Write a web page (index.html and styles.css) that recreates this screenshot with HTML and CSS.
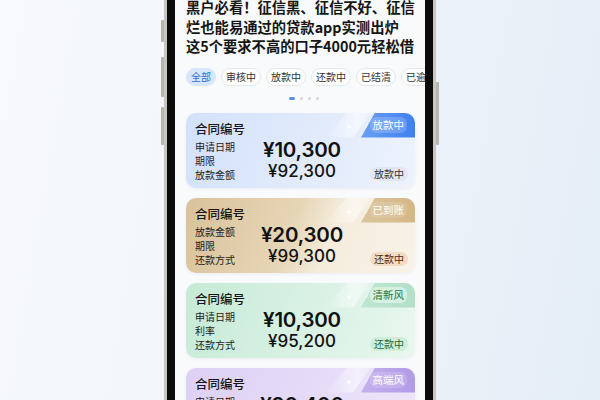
FILE: index.html
```html
<!DOCTYPE html>
<html lang="zh-CN">
<head>
<meta charset="utf-8">
<link rel="stylesheet" href="styles.css">
</head>
<body>
<div class="stage">
  <div class="phone">
    <span class="side-btn btn-l1"></span>
    <span class="side-btn btn-l2"></span>
    <span class="side-btn btn-l3"></span>
    <span class="side-btn btn-r1"></span>
    <div class="screen">
      <h1 class="title">黑户必看！征信黑、征信不好、征信<br>烂也能易通过的贷款app实测出炉<br>这5个要求不高的口子4000元轻松借</h1>
      <div class="tabs">
        <span class="tab tab-active">全部</span>
        <span class="tab">审核中</span>
        <span class="tab">放款中</span>
        <span class="tab">还款中</span>
        <span class="tab">已结清</span>
        <span class="tab">已逾期</span>
      </div>
      <div class="dots">
        <span class="dot dot-active"></span><span class="dot"></span><span class="dot"></span><span class="dot"></span>
      </div>
      <div class="cards">
        <div class="card card-blue">
          <div class="tag">
            <span class="shine"></span>
            <svg class="sparks" width="30" height="10" viewBox="0 0 30 10"><path d="M5 1.5L5.7 4.3L8.5 5L5.7 5.7L5 8.5L4.3 5.7L1.5 5L4.3 4.3Z M24 1.5L24.7 4.3L27.5 5L24.7 5.7L24 8.5L23.3 5.7L20.5 5L23.3 4.3Z" fill="#fff"/></svg>
            <span class="tag-body"><span class="tag-text">放款中</span></span>
          </div>
          <div class="card-left">
            <div class="card-title">合同编号</div>
            <div class="label">申请日期</div>
            <div class="label">期限</div>
            <div class="label">放款金额</div>
          </div>
          <div class="amounts">
            <div class="amt-big">¥10,300</div>
            <div class="amt-small">¥92,300</div>
          </div>
          <div class="card-right"><span class="chip">放款中</span></div>
        </div>

        <div class="card card-gold">
          <div class="tag">
            <span class="shine"></span>
            <svg class="sparks" width="30" height="10" viewBox="0 0 30 10"><path d="M5 1.5L5.7 4.3L8.5 5L5.7 5.7L5 8.5L4.3 5.7L1.5 5L4.3 4.3Z M24 1.5L24.7 4.3L27.5 5L24.7 5.7L24 8.5L23.3 5.7L20.5 5L23.3 4.3Z" fill="#fff"/></svg>
            <span class="tag-body"><span class="tag-text">已到账</span></span>
          </div>
          <div class="card-left">
            <div class="card-title">合同编号</div>
            <div class="label">放款金额</div>
            <div class="label">期限</div>
            <div class="label">还款方式</div>
          </div>
          <div class="amounts">
            <div class="amt-big">¥20,300</div>
            <div class="amt-small">¥99,300</div>
          </div>
          <div class="card-right"><span class="chip">还款中</span></div>
        </div>

        <div class="card card-green">
          <div class="tag">
            <span class="shine"></span>
            <svg class="sparks" width="30" height="10" viewBox="0 0 30 10"><path d="M5 1.5L5.7 4.3L8.5 5L5.7 5.7L5 8.5L4.3 5.7L1.5 5L4.3 4.3Z M24 1.5L24.7 4.3L27.5 5L24.7 5.7L24 8.5L23.3 5.7L20.5 5L23.3 4.3Z" fill="#fff"/></svg>
            <span class="tag-body"><span class="tag-text">清新风</span></span>
          </div>
          <div class="card-left">
            <div class="card-title">合同编号</div>
            <div class="label">申请日期</div>
            <div class="label">利率</div>
            <div class="label">还款方式</div>
          </div>
          <div class="amounts">
            <div class="amt-big">¥10,300</div>
            <div class="amt-small">¥95,200</div>
          </div>
          <div class="card-right"><span class="chip">还款中</span></div>
        </div>

        <div class="card card-purple">
          <div class="tag">
            <span class="shine"></span>
            <svg class="sparks" width="30" height="10" viewBox="0 0 30 10"><path d="M5 1.5L5.7 4.3L8.5 5L5.7 5.7L5 8.5L4.3 5.7L1.5 5L4.3 4.3Z M24 1.5L24.7 4.3L27.5 5L24.7 5.7L24 8.5L23.3 5.7L20.5 5L23.3 4.3Z" fill="#fff"/></svg>
            <span class="tag-body"><span class="tag-text">高端风</span></span>
          </div>
          <div class="card-left">
            <div class="card-title">合同编号</div>
            <div class="label">申请日期</div>
            <div class="label">期限</div>
            <div class="label">放款金额</div>
          </div>
          <div class="amounts">
            <div class="amt-big">¥90,400</div>
            <div class="amt-small">¥92,300</div>
          </div>
          <div class="card-right"><span class="chip">放款中</span></div>
        </div>
      </div>
    </div>
  </div>
</div>
</body>
</html>
```

FILE: styles.css
```css
* { box-sizing: border-box; }
html, body { margin: 0; padding: 0; }
body {
  width: 600px;
  height: 400px;
  overflow: hidden;
  font-family: "Noto Sans CJK SC", "Noto Sans", sans-serif;
  background: linear-gradient(100deg, #f7f9fc 0%, #f1f5fa 45%, #e5edf7 100%);
}
.stage {
  width: 600px;
  height: 400px;
  overflow: hidden;
  display: flex;
  justify-content: center;
}
.phone {
  position: relative;
  width: 272px;
  height: 560px;
  margin-top: -60px;
  border: 3px solid #c9c6bf;
  border-radius: 44px;
  background: #0b0b0b;
  padding: 8px;
  flex-shrink: 0;
}
.side-btn {
  position: absolute;
  width: 3px;
  background: #b9b6af;
  border-radius: 1px;
}
.btn-l1 { left: -6px; top: 77px; height: 22px; }
.btn-l2 { left: -6px; top: 114px; height: 40px; }
.btn-l3 { left: -6px; top: 164px; height: 38px; }
.btn-r1 { right: -6px; top: 139px; height: 63px; }

.screen {
  width: 250px;
  height: 100%;
  background: #f9fafc;
  border-radius: 36px;
  overflow: hidden;
  padding: 46px 10px 0 11px;
}
.title {
  margin: 0;
  font-size: 14.3px;
  line-height: 19.5px;
  font-weight: 600;
  color: #151515;
  white-space: nowrap;
}
.tabs {
  display: flex;
  gap: 5px;
  margin-top: 12px;
  margin-right: -10px;
  overflow: hidden;
}
.tab {
  flex-shrink: 0;
  height: 18px;
  line-height: 16px;
  padding: 0 4px;
  font-size: 10px;
  color: #333;
  border: 1px solid #e4e7ec;
  background: #fff;
  border-radius: 9px;
}
.tab-active {
  background: #d9e6f9;
  border-color: #d9e6f9;
  color: #2f6cd0;
}
.dots {
  display: flex;
  justify-content: center;
  gap: 5px;
  margin-top: 11px;
  padding-left: 6px;
}
.dot {
  width: 3px;
  height: 3px;
  border-radius: 2px;
  background: #d2d6dd;
}
.dot-active {
  width: 6px;
  background: #5b8fe0;
}
.cards {
  display: flex;
  flex-direction: column;
  gap: 10px;
  margin-top: 13px;
}
.card {
  position: relative;
  display: flex;
  height: 75px;
  border-radius: 10px;
  padding: 8px 7px 7px 9px;
  overflow: hidden;
  box-shadow: 0 1px 3px rgba(60, 80, 120, 0.08);
}
.card-blue { background: linear-gradient(110deg, #d2e1fa 0%, #e0eafb 50%, #eef3fd 100%); }
.card-gold { background: linear-gradient(110deg, #d9c29a 0%, #e6d5b6 45%, #f5ecdc 62%, #f8f2e8 100%); }
.card-green { background: linear-gradient(110deg, #c6ead6 0%, #d8f1e3 50%, #e9f7ef 100%); }
.card-purple { background: linear-gradient(110deg, #ddd0f5 0%, #e5dbf8 50%, #ede6fb 100%); }

.card-left {
  width: 60px;
  flex-shrink: 0;
}
.card-title {
  font-size: 12.5px;
  line-height: 16px;
  font-weight: 500;
  color: #151515;
  margin-bottom: 3px;
}
.label {
  font-size: 10px;
  line-height: 14px;
  color: #222;
}
.amounts {
  width: 94px;
  flex-shrink: 0;
  text-align: center;
  padding-top: 18px;
  color: #111;
  position: relative;
  z-index: 1;
  font-family: Inter, "Noto Sans", sans-serif;
}
.amt-big {
  font-size: 20.5px;
  line-height: 22px;
  font-weight: 600;
  letter-spacing: -0.2px;
}
.amt-small {
  font-size: 17px;
  line-height: 20px;
  font-weight: 500;
}
.card-right {
  flex: 1;
  display: flex;
  justify-content: flex-end;
  align-items: flex-end;
}
.chip {
  font-size: 10px;
  line-height: 14px;
  padding: 0 4px;
  border-radius: 7px;
}
.card-blue .chip { background: #e2e8f3; color: #333; }
.card-gold .chip { background: #f2dcc4; color: #4a2e18; }
.card-green .chip { background: #cdeedb; color: #24683f; }
.card-purple .chip { background: #e6dcf7; color: #4a3480; }

.tag {
  position: absolute;
  top: 0;
  right: 0;
  width: 90px;
  height: 25px;
}
.shine {
  position: absolute;
  left: 0;
  top: 0;
  width: 46px;
  height: 100%;
  background: linear-gradient(90deg, rgba(255,255,255,0) 0%, rgba(255,255,255,0.55) 70%, rgba(255,255,255,0.2) 100%);
  clip-path: polygon(22px 0, 100% 0, 28px 100%, 0 100%);
}
.sparks {
  position: absolute;
  left: 19px;
  top: 9px;
}
.tag-body {
  position: absolute;
  right: 0;
  top: 0;
  width: 54px;
  height: 25px;
  display: flex;
  align-items: center;
  justify-content: flex-end;
  padding-right: 8px;
  clip-path: polygon(14px 0, 100% 0, 100% 100%, 0 100%);
}
.tag-text {
  font-size: 10.5px;
  line-height: 14px;
  padding: 1px 3px;
  border-radius: 7px;
  color: #fff;
}
.card-blue .tag-body { background: linear-gradient(90deg, #6a9ff3, #3f7ff0); }
.card-blue .tag-text { background: rgba(255,255,255,0.18); }
.card-gold .tag-body { background: linear-gradient(90deg, #dcc59c, #d3b786); }
.card-gold .tag-text { background: rgba(255,255,255,0.12); }
.card-green .tag-body { background: linear-gradient(90deg, #bfe6cf, #b3e0c6); }
.card-green .tag-text { background: #d4f1e1; color: #2a7448; }
.card-purple .tag-body { background: linear-gradient(90deg, #c4b0ee, #b29be6); }
.card-purple .tag-text { background: rgba(255,255,255,0.15); }
```
